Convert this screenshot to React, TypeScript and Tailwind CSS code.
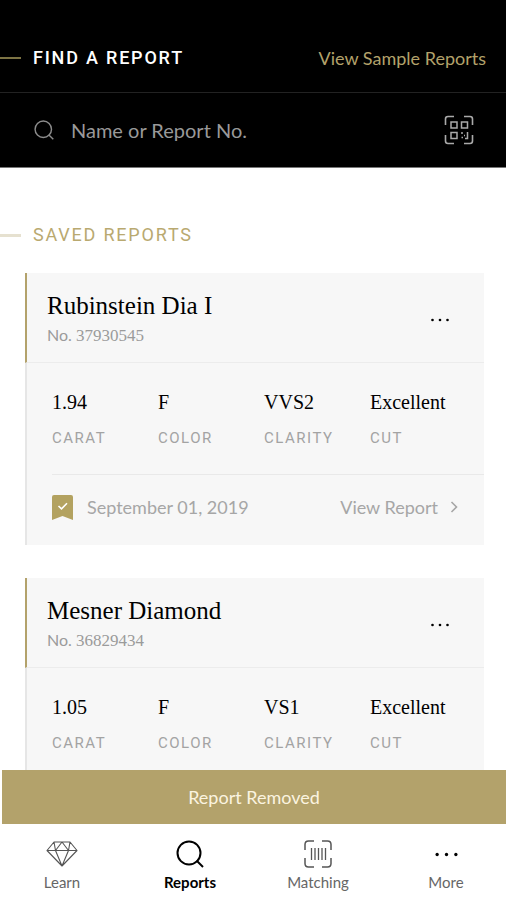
import type { ReactNode } from "react";

const sans = "font-['Lato','Open_Sans',sans-serif]";
const caps = "font-['Roboto','Liberation_Sans',sans-serif]";
const serif = "font-['Liberation_Serif','Times_New_Roman',serif]";

type Report = {
  name: string;
  number: string;
  date?: string;
  stats: { value: string; label: string }[];
};

const reports: Report[] = [
  {
    name: "Rubinstein Dia I",
    number: "37930545",
    date: "September 01, 2019",
    stats: [
      { value: "1.94", label: "CARAT" },
      { value: "F", label: "COLOR" },
      { value: "VVS2", label: "CLARITY" },
      { value: "Excellent", label: "CUT" },
    ],
  },
  {
    name: "Mesner Diamond",
    number: "36829434",
    stats: [
      { value: "1.05", label: "CARAT" },
      { value: "F", label: "COLOR" },
      { value: "VS1", label: "CLARITY" },
      { value: "Excellent", label: "CUT" },
    ],
  },
];

function SearchIcon({ className }: { className: string }) {
  return (
    <svg viewBox="0 0 28 28" fill="none" stroke="currentColor" className={className} aria-hidden="true">
      <circle cx="13" cy="13" r="11.5" />
      <path d="M20.5 20.5 27 27" />
    </svg>
  );
}

function QrIcon() {
  return (
    <svg viewBox="0 0 30 30" fill="none" stroke="currentColor" className="size-[30px]" aria-hidden="true">
      <path strokeWidth="1.6" d="M1.5 10V4Q1.5 1.5 4 1.5H10M20 1.5H26Q28.5 1.5 28.5 4V10M28.5 20V26Q28.5 28.5 26 28.5H20M10 28.5H4Q1.5 28.5 1.5 26V20" />
      <path strokeWidth="1.5" d="M7 7h6v6H7zM17.5 7h6v6h-6zM7 17.5h6v6H7z" />
      <path strokeWidth="1.5" d="M17 18h2M23.5 17v6.500H21M17.500 22.5h1.500M20 20.5h1" />
    </svg>
  );
}

function Dots({ className }: { className: string }) {
  return (
    <svg viewBox="0 0 24 24" fill="currentColor" className={className} aria-hidden="true">
      <circle cx="3" cy="12" r="1.6" />
      <circle cx="12" cy="12" r="1.6" />
      <circle cx="21" cy="12" r="1.6" />
    </svg>
  );
}

function ReportCard({ report }: { report: Report }) {
  return (
    <article className="bg-[#f7f7f7]">
      <header className="flex h-[90px] items-center justify-between border-b border-l-2 border-b-[#ececec] border-l-[#b3a26b] pt-1 pr-8 pl-5">
        <div>
          <h3 className={`text-[25px] leading-8 text-black ${serif}`}>{report.name}</h3>
          <p className={`text-[17px] leading-7 text-[#9b9b9b] ${serif}`}>
            <span className={`text-base ${sans}`}>No.</span> {report.number}
          </p>
        </div>
        <button type="button" aria-label={`Options for ${report.name}`} className="flex size-6 items-center justify-center text-black">
          <Dots className="size-5" />
        </button>
      </header>
      <div className="border-l-2 border-[#e6e6e6] pl-[25px]">
        <dl className="grid h-[111px] grid-cols-4 pt-[25px] pr-2">
          {report.stats.map((stat) => (
            <div key={stat.label} className="flex flex-col-reverse justify-end gap-3">
              <dt className={`text-[15px] leading-5 tracking-widest text-[#a3a3a3] ${caps}`}>{stat.label}</dt>
              <dd className={`text-xl leading-7 text-black ${serif}`}>{stat.value}</dd>
            </div>
          ))}
        </dl>
        {report.date && (
          <footer className="flex h-[71px] items-center justify-between border-t border-[#e9e9e9] pr-[26px] pb-[6px]">
            <div className="flex items-center gap-[14px]">
              <svg viewBox="0 0 21 25" className="h-[25px] w-[21px]" aria-hidden="true">
                <path fill="#b3a260" d="M0 2Q0 0 2 0H19Q21 0 21 2V25L10.5 21 0 25Z" />
                <path fill="none" stroke="#fff" strokeWidth="1.6" d="m6.5 11 3 2.800L15 8.300" />
              </svg>
              <time dateTime="2019-09-01" className={`text-lg text-[#a6a6a6] ${sans}`}>{report.date}</time>
            </div>
            <a href="#report" className={`flex items-center gap-3 text-lg text-[#a6a6a6] ${sans}`}>
              View Report
              <svg viewBox="0 0 8 12" fill="none" stroke="currentColor" strokeWidth="1.6" className="h-3 w-2" aria-hidden="true">
                <path d="m1.500 1 5 5-5 5" />
              </svg>
            </a>
          </footer>
        )}
      </div>
    </article>
  );
}

function NavItem({ label, active, children }: { label: string; active?: boolean; children: ReactNode }) {
  return (
    <a
      href={`#${label.toLowerCase()}`}
      aria-current={active ? "page" : undefined}
      className={`flex w-16 flex-col items-center text-[15px] leading-6 ${active ? "font-bold text-black" : "text-[#666]"} ${sans}`}
    >
      <span className="flex h-8 items-center justify-center">{children}</span>
      {label}
    </a>
  );
}

export default function App() {
  return (
    <div className={`flex h-screen flex-col bg-white ${sans}`}>
      <header className="shrink-0 border-b border-[#777] bg-black pt-6">
        <div className="flex h-[69px] items-center justify-between border-b border-[#222] pr-5">
          <h1 className={`flex items-center gap-3 text-lg font-medium tracking-widest text-white ${caps}`}>
            <span className="h-0.5 w-[21px] bg-[#7d7444]" />
            FIND A REPORT
          </h1>
          <a href="#samples" className="text-lg text-[#b3a26b]">
            View Sample Reports
          </a>
        </div>
        <div className="flex h-[74px] items-center pr-8 pl-[34px] text-[#8c8c8c]">
          <SearchIcon className="size-5 stroke-2" />
          <input
            type="text"
            aria-label="Name or Report No."
            placeholder="Name or Report No."
            className="ml-[17px] min-w-0 flex-1 bg-transparent text-xl text-white outline-none placeholder:text-[#999]"
          />
          <button type="button" aria-label="Scan code" className="text-[#aaa]">
            <QrIcon />
          </button>
        </div>
      </header>

      <main className="min-h-0 flex-1 overflow-hidden">
        <h2 className={`mt-[53px] flex items-center gap-3 text-lg leading-7 tracking-widest text-[#b9a970] ${caps}`}>
          <span className="h-[3px] w-[21px] bg-[#e6e1d0]" />
          SAVED REPORTS
        </h2>
        <div className="mt-6 mr-[22px] ml-[25px] flex flex-col gap-[33px]">
          {reports.map((report) => (
            <ReportCard key={report.number} report={report} />
          ))}
        </div>
      </main>

      <div role="status" className="ml-0.5 shrink-0 bg-[#b3a26b] py-[13px] text-center text-lg leading-7 text-[#fbf4e0]">
        Report Removed
      </div>

      <nav className="flex h-[76px] shrink-0 justify-between pt-[14px] pr-7 pl-[30px]">
        <NavItem label="Learn">
          <svg viewBox="0 0 32 26" fill="none" stroke="#555" strokeWidth="1.1" strokeLinejoin="round" className="h-[26px] w-8" aria-hidden="true">
            <path d="M8 1H24L31 9.500 16 25 1 9.500ZM1 9.500H31M8 1 9.500 9.500 16 25 22.500 9.500 24 1M9.500 9.500 16 1 22.500 9.500" />
          </svg>
        </NavItem>
        <NavItem label="Reports" active>
          <SearchIcon className="size-7 stroke-2" />
        </NavItem>
        <NavItem label="Matching">
          <svg viewBox="0 0 28 28" fill="none" stroke="#555" className="size-7" aria-hidden="true">
            <path strokeWidth="1.5" d="M1 10V4.500Q1 1 4.500 1H10M18 1H23.500Q27 1 27 4.500V10M27 18V23.500Q27 27 23.500 27H18M10 27H4.500Q1 27 1 23.500V18" />
            <path strokeWidth="1.3" d="M7.500 8V20M11 8V20M14.500 8V20M18 8V20M21.500 8V20" />
          </svg>
        </NavItem>
        <NavItem label="More">
          <Dots className="size-[25px] text-black" />
        </NavItem>
      </nav>
    </div>
  );
}
